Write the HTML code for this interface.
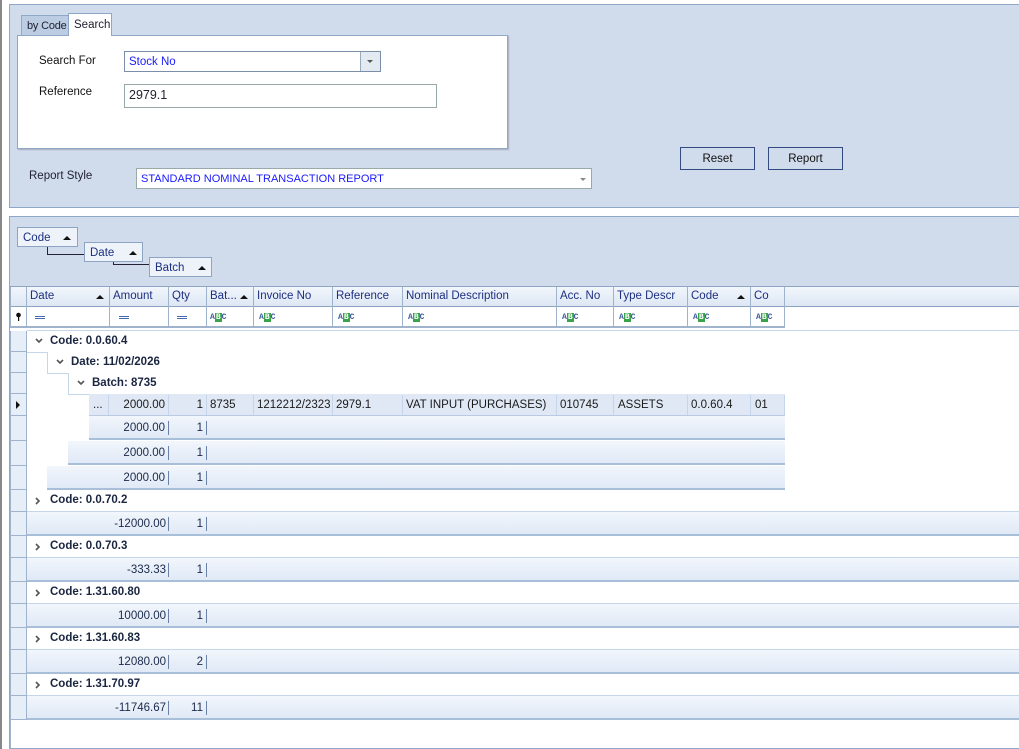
<!DOCTYPE html><html><head><meta charset="utf-8"><style>
*{box-sizing:border-box;margin:0;padding:0}
body{width:1019px;height:749px;background:#fff;font-family:"Liberation Sans",sans-serif;font-size:11.5px;position:relative;overflow:hidden;color:#1a1a1a}
.a{position:absolute;white-space:nowrap}
.lb{position:absolute;color:#111}
.hd{position:absolute;top:287px;height:20px;color:#1c2f80;padding:3px 0 0 4px;white-space:nowrap}
.vl{position:absolute;width:1px;background:#9fb3cc}
.abc{position:absolute;top:313px;font-size:8px;font-family:"Liberation Mono",monospace;font-weight:bold;color:#3a5a9a}
.abc b{background:#3aa34a;color:#fff;padding:0 1px}
.eq{position:absolute;top:316px;width:10px;height:3px;border-top:1px solid #4a6ab0;border-bottom:1px solid #4a6ab0}
.ind{position:absolute;left:10px;width:17px;background:#e6eef8;border:1px solid #9fb3cc;border-top:none}
.gr{position:absolute;right:0;height:22px;border-bottom:1px solid #c5d5ea;border-left:1px solid #c5d5ea;background:#fff;font-weight:bold;color:#1a2540;padding:4px 0 0 23px}
.gr svg{position:absolute;left:8px;top:7px}
.ft{position:absolute;height:24px;background:linear-gradient(#f2f6fc,#e0e9f6);border-bottom:2px solid #a9bfd9;color:#1a2a4a}
.ft span{position:absolute;top:6px;text-align:right}
.ft .s{position:absolute;top:5px;width:1px;height:14px;background:#6a82a8}
.tri{display:inline-block;width:0;height:0;border-left:4px solid transparent;border-right:4px solid transparent;border-bottom:4px solid #111}
</style></head><body>
<div class="a" style="left:0;top:0;width:2px;height:749px;background:#888"></div>
<div class="a" style="left:9px;top:4px;width:1010px;height:204px;background:#d0dcec;border:1px solid #90a8c8;border-right:none"></div>
<div class="a" style="left:21px;top:15px;width:48px;height:21px;background:#bccce2;border:1px solid #90a8c8;color:#223;padding:4px 0 0 5px;font-size:11px;letter-spacing:-0.2px">by Code</div>
<div class="a" style="left:68px;top:13px;width:44px;height:23px;background:#fff;border:1px solid #90a8c8;border-bottom:none;color:#223;padding:5px 0 0 5px;z-index:2">Search</div>
<div class="a" style="left:17px;top:35px;width:491px;height:114px;background:#fff;border:1px solid #90a8c8;box-shadow:1px 1px 1px #aab"></div>
<div class="lb" style="left:39px;top:55px">Search For</div>
<div class="a" style="left:124px;top:51px;width:257px;height:21px;border:1px solid #7a8ea8;background:#fff;color:#1a1aff;padding:4px 0 0 4px">Stock No</div>
<div class="a" style="left:360px;top:52px;width:20px;height:19px;background:#e4eaf2;border-left:1px solid #9ab"><div class="a" style="left:6px;top:8px;border-left:3px solid transparent;border-right:3px solid transparent;border-top:3px solid #555"></div></div>
<div class="lb" style="left:39px;top:86px">Reference</div>
<div class="a" style="left:124px;top:84px;width:313px;height:24px;border:1px solid #9aa;background:#fff;color:#223;padding:3px 0 0 4px;font-size:12.5px">2979.1</div>
<div class="lb" style="left:29px;top:170px;color:#223">Report Style</div>
<div class="a" style="left:136px;top:168px;width:456px;height:21px;border:1px solid #9aa;background:#fff;color:#1a1aff;padding:4px 0 0 4px;font-size:11px">STANDARD NOMINAL TRANSACTION REPORT<div class="a" style="left:443px;top:9px;border-left:3px solid transparent;border-right:3px solid transparent;border-top:3px solid #888"></div></div>
<div class="a" style="left:680px;top:147px;width:75px;height:23px;border:1px solid #334a80;text-align:center;padding-top:5px;color:#111">Reset</div>
<div class="a" style="left:768px;top:147px;width:75px;height:23px;border:1px solid #334a80;text-align:center;padding-top:5px;color:#111">Report</div>
<div class="a" style="left:9px;top:216px;width:1010px;height:533px;border:1px solid #90a8c8;border-right:none;background:#fff"></div>
<div class="a" style="left:10px;top:217px;width:1009px;height:70px;background:#d0dcec"></div>
<div class="a" style="left:47px;top:245px;width:38px;height:10px;border-left:1px solid #223;border-bottom:1px solid #223"></div>
<div class="a" style="left:113px;top:260px;width:38px;height:5px;border-left:1px solid #223;border-bottom:1px solid #223"></div>
<div class="a" style="left:17px;top:227px;width:61px;height:20px;background:#eef3fa;border:1px solid #8ea4c4;color:#1c2f80;padding:4px 0 0 5px">Code<span class="tri a" style="left:45px;top:8px"></span></div>
<div class="a" style="left:84px;top:242px;width:59px;height:20px;background:#eef3fa;border:1px solid #8ea4c4;color:#1c2f80;padding:4px 0 0 5px">Date<span class="tri a" style="left:44px;top:8px"></span></div>
<div class="a" style="left:149px;top:257px;width:63px;height:20px;background:#eef3fa;border:1px solid #8ea4c4;color:#1c2f80;padding:4px 0 0 5px">Batch<span class="tri a" style="left:48px;top:8px"></span></div>
<!-- header bg + lines -->
<div class="a" style="left:10px;top:286px;width:1009px;height:21px;background:linear-gradient(#f2f6fc,#dde7f4);border-top:1px solid #8ea4c4;border-bottom:1px solid #8ea4c4"></div>
<div class="a" style="left:10px;top:307px;width:775px;height:20px;background:#fff"></div>
<div class="vl" style="left:10px;top:287px;height:40px"></div>
<div class="vl" style="left:26px;top:287px;height:40px"></div>
<div class="vl" style="left:109px;top:287px;height:40px"></div>
<div class="vl" style="left:168px;top:287px;height:40px"></div>
<div class="vl" style="left:206px;top:287px;height:40px"></div>
<div class="vl" style="left:253px;top:287px;height:40px"></div>
<div class="vl" style="left:332px;top:287px;height:40px"></div>
<div class="vl" style="left:402px;top:287px;height:40px"></div>
<div class="vl" style="left:556px;top:287px;height:40px"></div>
<div class="vl" style="left:613px;top:287px;height:40px"></div>
<div class="vl" style="left:687px;top:287px;height:40px"></div>
<div class="vl" style="left:750px;top:287px;height:40px"></div>
<div class="vl" style="left:784px;top:287px;height:40px"></div>
<div class="hd" style="left:26px">Date</div><span class="tri a" style="left:96px;top:295px"></span>
<div class="hd" style="left:109px">Amount</div>
<div class="hd" style="left:168px">Qty</div>
<div class="hd" style="left:206px">Bat...</div><span class="tri a" style="left:240px;top:295px"></span>
<div class="hd" style="left:253px">Invoice No</div>
<div class="hd" style="left:332px">Reference</div>
<div class="hd" style="left:402px">Nominal Description</div>
<div class="hd" style="left:556px">Acc. No</div>
<div class="hd" style="left:613px">Type Descr</div>
<div class="hd" style="left:687px">Code</div><span class="tri a" style="left:737px;top:295px"></span>
<div class="hd" style="left:750px">Co</div>
<svg class="a" style="left:15px;top:312px" width="7" height="10"><circle cx="3.5" cy="3" r="2.3" fill="#111"/><rect x="3" y="4" width="1.2" height="5" fill="#111"/></svg>
<div class="eq" style="left:35px"></div>
<div class="eq" style="left:119px"></div>
<div class="eq" style="left:177px"></div>
<span class="abc" style="left:210px">A<b>B</b>C</span>
<span class="abc" style="left:259px">A<b>B</b>C</span>
<span class="abc" style="left:338px">A<b>B</b>C</span>
<span class="abc" style="left:408px">A<b>B</b>C</span>
<span class="abc" style="left:562px">A<b>B</b>C</span>
<span class="abc" style="left:619px">A<b>B</b>C</span>
<span class="abc" style="left:693px">A<b>B</b>C</span>
<span class="abc" style="left:756px">A<b>B</b>C</span>
<div class="a" style="left:10px;top:326px;width:775px;height:2px;background:#9fb3cc"></div>
<div class="a" style="left:27px;top:328px;width:992px;height:3px;background:#fff;border-bottom:1px solid #c5d5ea"></div>
<div class="ind" style="top:331px;height:21px"></div>
<div class="ind" style="top:352px;height:21px"></div>
<div class="ind" style="top:373px;height:21px"></div>
<div class="ind" style="top:394px;height:22px"><div class="a" style="left:5px;top:7px;border-top:4px solid transparent;border-bottom:4px solid transparent;border-left:4px solid #111"></div></div>
<div class="ind" style="top:416px;height:25px"></div>
<div class="ind" style="top:441px;height:25px"></div>
<div class="ind" style="top:466px;height:24px"></div>
<div class="ind" style="top:490px;height:22px"></div>
<div class="ind" style="top:512px;height:24px"></div>
<div class="ind" style="top:536px;height:22px"></div>
<div class="ind" style="top:558px;height:24px"></div>
<div class="ind" style="top:582px;height:22px"></div>
<div class="ind" style="top:604px;height:24px"></div>
<div class="ind" style="top:628px;height:22px"></div>
<div class="ind" style="top:650px;height:24px"></div>
<div class="ind" style="top:674px;height:22px"></div>
<div class="ind" style="top:696px;height:24px"></div>
<div class="a" style="left:10px;top:720px;width:1px;height:29px;background:#9fb3cc"></div>
<div class="gr" style="left:27px;top:331px;border-left:none">Code: 0.0.60.4<svg width="8" height="6"><path d="M1 1 L4 4 L7 1" stroke="#555" stroke-width="1.6" fill="none"/></svg></div>
<div class="gr" style="left:47px;top:352px">Date: 11/02/2026<svg width="8" height="6"><path d="M1 1 L4 4 L7 1" stroke="#555" stroke-width="1.6" fill="none"/></svg></div>
<div class="gr" style="left:68px;top:373px">Batch: 8735<svg width="8" height="6"><path d="M1 1 L4 4 L7 1" stroke="#555" stroke-width="1.6" fill="none"/></svg></div>
<div class="a" style="left:89px;top:394px;width:696px;height:22px;background:#dfe8f4;border-bottom:1px solid #b8cbe2"></div>
<div class="a" style="left:785px;top:394px;width:234px;height:22px;background:#fff"></div>
<div class="vl" style="left:108px;top:395px;height:20px;background:#c5d5ea"></div>
<div class="vl" style="left:168px;top:395px;height:20px;background:#c5d5ea"></div>
<div class="vl" style="left:206px;top:395px;height:20px;background:#c5d5ea"></div>
<div class="vl" style="left:253px;top:395px;height:20px;background:#c5d5ea"></div>
<div class="vl" style="left:332px;top:395px;height:20px;background:#c5d5ea"></div>
<div class="vl" style="left:402px;top:395px;height:20px;background:#c5d5ea"></div>
<div class="vl" style="left:556px;top:395px;height:20px;background:#c5d5ea"></div>
<div class="vl" style="left:613px;top:395px;height:20px;background:#c5d5ea"></div>
<div class="vl" style="left:687px;top:395px;height:20px;background:#c5d5ea"></div>
<div class="vl" style="left:750px;top:395px;height:20px;background:#c5d5ea"></div>
<div class="vl" style="left:784px;top:395px;height:20px;background:#c5d5ea"></div>
<div class="a" style="left:93px;top:399px">...</div>
<div class="a" style="left:109px;top:399px;width:56px;text-align:right">2000.00</div>
<div class="a" style="left:169px;top:399px;width:34px;text-align:right">1</div>
<div class="a" style="left:210px;top:399px">8735</div>
<div class="a" style="left:257px;top:399px">1212212/2323</div>
<div class="a" style="left:336px;top:399px">2979.1</div>
<div class="a" style="left:406px;top:399px">VAT INPUT (PURCHASES)</div>
<div class="a" style="left:560px;top:399px">010745</div>
<div class="a" style="left:618px;top:399px">ASSETS</div>
<div class="a" style="left:691px;top:399px">0.0.60.4</div>
<div class="a" style="left:755px;top:399px">01</div>
<div class="ft" style="left:89px;top:416px;width:696px"><span style="left:20px;width:56px">2000.00</span><div class="s" style="left:79px"></div><span style="left:80px;width:34px">1</span><div class="s" style="left:117px"></div></div>
<div class="ft" style="left:68px;top:441px;width:717px"><span style="left:41px;width:56px">2000.00</span><div class="s" style="left:100px"></div><span style="left:101px;width:34px">1</span><div class="s" style="left:138px"></div></div>
<div class="ft" style="left:47px;top:466px;width:738px"><span style="left:62px;width:56px">2000.00</span><div class="s" style="left:121px"></div><span style="left:122px;width:34px">1</span><div class="s" style="left:159px"></div></div>
<div class="a" style="left:785px;top:416px;width:234px;height:74px;background:#fff"></div>
<div class="gr" style="left:27px;top:490px;border-left:none">Code: 0.0.70.2<svg width="6" height="8"><path d="M1 1 L4 4 L1 7" stroke="#555" stroke-width="1.6" fill="none"/></svg></div>
<div class="ft" style="left:27px;top:512px;width:992px"><span style="left:60px;width:79px">-12000.00</span><div class="s" style="left:141px"></div><span style="left:142px;width:34px">1</span><div class="s" style="left:179px"></div></div>
<div class="gr" style="left:27px;top:536px;border-left:none">Code: 0.0.70.3<svg width="6" height="8"><path d="M1 1 L4 4 L1 7" stroke="#555" stroke-width="1.6" fill="none"/></svg></div>
<div class="ft" style="left:27px;top:558px;width:992px"><span style="left:60px;width:79px">-333.33</span><div class="s" style="left:141px"></div><span style="left:142px;width:34px">1</span><div class="s" style="left:179px"></div></div>
<div class="gr" style="left:27px;top:582px;border-left:none">Code: 1.31.60.80<svg width="6" height="8"><path d="M1 1 L4 4 L1 7" stroke="#555" stroke-width="1.6" fill="none"/></svg></div>
<div class="ft" style="left:27px;top:604px;width:992px"><span style="left:60px;width:79px">10000.00</span><div class="s" style="left:141px"></div><span style="left:142px;width:34px">1</span><div class="s" style="left:179px"></div></div>
<div class="gr" style="left:27px;top:628px;border-left:none">Code: 1.31.60.83<svg width="6" height="8"><path d="M1 1 L4 4 L1 7" stroke="#555" stroke-width="1.6" fill="none"/></svg></div>
<div class="ft" style="left:27px;top:650px;width:992px"><span style="left:60px;width:79px">12080.00</span><div class="s" style="left:141px"></div><span style="left:142px;width:34px">2</span><div class="s" style="left:179px"></div></div>
<div class="gr" style="left:27px;top:674px;border-left:none">Code: 1.31.70.97<svg width="6" height="8"><path d="M1 1 L4 4 L1 7" stroke="#555" stroke-width="1.6" fill="none"/></svg></div>
<div class="ft" style="left:27px;top:696px;width:992px"><span style="left:60px;width:79px">-11746.67</span><div class="s" style="left:141px"></div><span style="left:142px;width:34px">11</span><div class="s" style="left:179px"></div></div>
</body></html>
